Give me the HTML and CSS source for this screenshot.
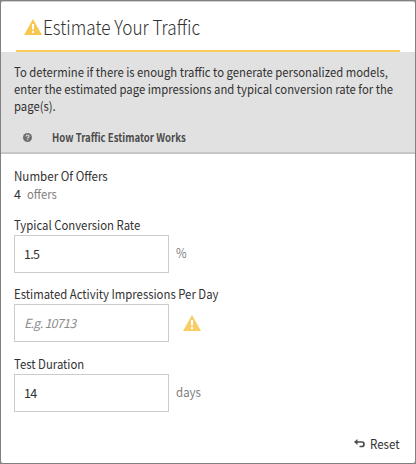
FILE: index.html
```html
<!DOCTYPE html>
<html lang="en">
<head>
<meta charset="utf-8">
<title>Estimate Your Traffic</title>
<link rel="stylesheet" href="styles.css">
</head>
<body>
<main class="panel">
  <header class="header">
    <svg class="warning" viewBox="0 0 18 16"><path fill="currentColor" d="M9 0 18 16H0Z"/><path fill="#fff" d="M8 5h2v5.5H8zM8 12h2v2H8z"/></svg>
    <h1 class="title">Estimate Your Traffic</h1>
  </header>
  <section class="intro">
    <p class="copy"><span class="line">To determine if there is enough traffic to generate personalized models,</span><span class="line">enter the estimated page impressions and typical conversion rate for the</span><span class="line">page(s).</span></p>
    <a class="help"><svg class="help-icon" viewBox="0 0 9 9"><circle cx="4.5" cy="4.5" r="4.5" fill="#707070"/><path d="M3.1 3.5C3.1 1.5 6 1.6 6 3.3 6 4.3 4.6 4.3 4.6 5.5M4.6 6.3v1" fill="none" stroke="#e1e1e1" stroke-width="1.1"/></svg><span class="help-text">How Traffic Estimator Works</span></a>
  </section>
  <form class="form">
    <div class="offers">
      <div class="label offers-label">Number Of Offers</div>
      <div class="value">4<span class="unit">offers</span></div>
    </div>
    <div class="field">
      <label class="label" for="rate">Typical Conversion Rate</label>
      <div class="row"><input class="input" id="rate" value="1.5"><span class="suffix">%</span></div>
    </div>
    <div class="field">
      <label class="label" for="impressions">Estimated Activity Impressions Per Day</label>
      <div class="row"><input class="input" id="impressions" placeholder="E.g. 10713"><svg class="warning field-warning" viewBox="0 0 18 16"><path fill="currentColor" d="M9 0 18 16H0Z"/><path fill="#fff" d="M8 5h2v5.5H8zM8 12h2v2H8z"/></svg></div>
    </div>
    <div class="field">
      <label class="label" for="duration">Test Duration</label>
      <div class="row"><input class="input" id="duration" value="14"><span class="suffix">days</span></div>
    </div>
    <button class="reset" type="button"><svg class="reset-icon" viewBox="0 0 11 9"><path d="M0 3 3.5 0v6Z" fill="#4b4b4b"/><path d="M2.5 3H8q2 0 2 2.2T8 7.5H5.5" fill="none" stroke="#4b4b4b" stroke-width="1.7"/></svg><span class="reset-text">Reset</span></button>
  </form>
</main>
</body>
</html>
```
FILE: styles.css
```css
* { box-sizing: border-box; }
body {
  margin: 0;
  background: #808080;
  color: #323232;
  font: 12.5px/17px "Noto Sans CJK SC", "Open Sans", sans-serif;
}
.panel {
  width: 416px;
  height: 464px;
  border: 1px solid #808080;
  border-radius: 3px;
  background: #fff;
  box-shadow: inset 0 1px #d0d0d0;
}
.header {
  display: flex;
  align-items: center;
  height: 51px;
  margin: 0 15px;
  padding: 3px 0 0 8px;
  border-bottom: 2px solid #fbcb60;
}
.warning { width: 18px; height: 16px; color: #f8c750; flex: none; }
.title {
  margin: 0 0 1px 1px;
  font-size: 19.5px;
  font-weight: 300;
  line-height: 28px;
  white-space: nowrap;
  transform: scaleX(.881);
  transform-origin: left;
}
.intro {
  height: 102px;
  padding: 11px 13px 0;
  border-bottom: 2px solid #c6c6c6;
  background: #e1e1e1;
}
.copy { margin: 0; }
.line {
  display: block;
  width: max-content;
  white-space: nowrap;
  transform: scaleX(.904);
  transform-origin: left;
}
.help { display: flex; align-items: center; margin-top: 15px; padding-left: 9px; }
.help-icon { width: 9px; height: 9px; }
.help-text {
  margin-left: 20px;
  color: #4b4b4b;
  font-size: 11px;
  font-weight: 700;
  transform: scaleX(.873);
  transform-origin: left;
}
.form { padding: 14px 13px 0; }
.offers { height: 49px; }
.value { height: 17px; line-height: 16px; }
.unit, .suffix { color: #808080; }
.unit {
  display: inline-block;
  margin-left: 6px;
  transform: scaleX(.9);
  transform-origin: left;
}
.field { height: 70px; }
.field:nth-child(2) { height: 69px; }
.label {
  display: block;
  width: max-content;
  height: 18px;
  line-height: 15px;
  white-space: nowrap;
  transform: scaleX(.907);
  transform-origin: left;
}
.offers-label { transform: scaleX(.925); }
.row { display: flex; align-items: center; height: 38px; }
.input {
  width: 155px;
  height: 38px;
  padding: 0 9px 1px;
  border: 1px solid #ccc;
  background: #fff;
  color: #323232;
  font: inherit;
  letter-spacing: -.75px;
}
.input::placeholder { color: #8e8e8e; font-style: italic; opacity: 1; }
.suffix {
  margin: 0 0 4px 7px;
  transform: scaleX(.92);
  transform-origin: left;
}
.field-warning { margin-left: 14px; opacity: .88; }
.reset {
  display: flex;
  align-items: center;
  margin: 9px 0 0 auto;
  padding: 0;
  border: 0;
  background: none;
  color: #323232;
  font: inherit;
}
.reset-icon { width: 11px; height: 9px; margin-right: 5px; }
.reset-text { transform: scaleX(.92); transform-origin: left; }
```
